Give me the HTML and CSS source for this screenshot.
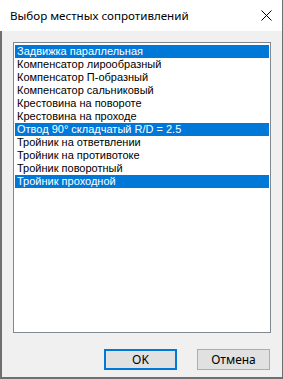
FILE: index.html
```html
<!DOCTYPE html>
<html>
<head lang="ru">
  <meta charset="UTF-8">
  <title>Выбор местных сопротивлений</title>
  <link rel="stylesheet" href="styles.css">
</head>
<body>
<div class="window">
  <div class="titlebar">
    <span class="title-text">Выбор местных сопротивлений</span>
    <span class="close-btn">
      <svg width="11" height="11" viewBox="0 0 11 11"><path d="M0.5 0.5L10.5 10.5M10.5 0.5L0.5 10.5" stroke="#000" stroke-width="1" fill="none"/></svg>
    </span>
  </div>
  <div class="client">
    <div class="listbox">
      <div class="item selected">Задвижка параллельная</div>
      <div class="item">Компенсатор лирообразный</div>
      <div class="item">Компенсатор П-образный</div>
      <div class="item">Компенсатор сальниковый</div>
      <div class="item">Крестовина на повороте</div>
      <div class="item">Крестовина на проходе</div>
      <div class="item selected">Отвод 90° складчатый R/D = 2.5</div>
      <div class="item">Тройник на ответвлении</div>
      <div class="item">Тройник на противотоке</div>
      <div class="item">Тройник поворотный</div>
      <div class="item selected">Тройник проходной</div>
    </div>
    <div class="buttons">
      <div class="btn default">OK</div>
      <div class="btn">Отмена</div>
    </div>
  </div>
</div>
</body>
</html>
```

FILE: styles.css
```css
body {
  margin: 0px;
  padding: 0px;
  background: #f0f0f0;
}

.window {
  width: 283px;
  height: 379px;
  box-sizing: border-box;
  border-right: 1px solid #6f6f6f;
  border-bottom: 2px solid #6f6f6f;
  display: flex;
  flex-direction: column;
}

.titlebar {
  height: 31px;
  background: #ffffff;
  display: flex;
  align-items: center;
  justify-content: space-between;
  font-family: "Noto Sans", sans-serif;
  font-size: 11.6px;
  color: #000000;
}

.title-text {
  padding-left: 10px;
}

.close-btn {
  width: 32px;
  height: 31px;
  display: flex;
  align-items: center;
  justify-content: center;
}

.client {
  flex: 1;
  background: #f0f0f0;
  border-left: 2px solid #6f6f6f;
  padding: 11px 11px 0px 11px;
  display: flex;
  flex-direction: column;
}

.listbox {
  height: 291px;
  box-sizing: border-box;
  border: 1px solid #828790;
  background: #ffffff;
  padding: 2px 1px;
  font-family: "Liberation Sans", Arial, sans-serif;
  font-size: 11px;
}

.item {
  height: 13px;
  line-height: 13px;
  padding-left: 2px;
  color: #000000;
  white-space: nowrap;
}

.item.selected {
  background: #0078d7;
  color: #ffffff;
}

.buttons {
  display: flex;
  justify-content: flex-end;
  gap: 20px;
  margin-top: 16px;
  padding-right: 1px;
}

.btn {
  width: 73px;
  height: 21px;
  box-sizing: border-box;
  border: 1px solid #adadad;
  background: #e1e1e1;
  font-family: "Noto Sans", sans-serif;
  font-size: 12px;
  line-height: 19px;
  text-align: center;
  color: #000000;
}

.btn.default {
  border: 2px solid #0078d7;
  line-height: 17px;
}
```
